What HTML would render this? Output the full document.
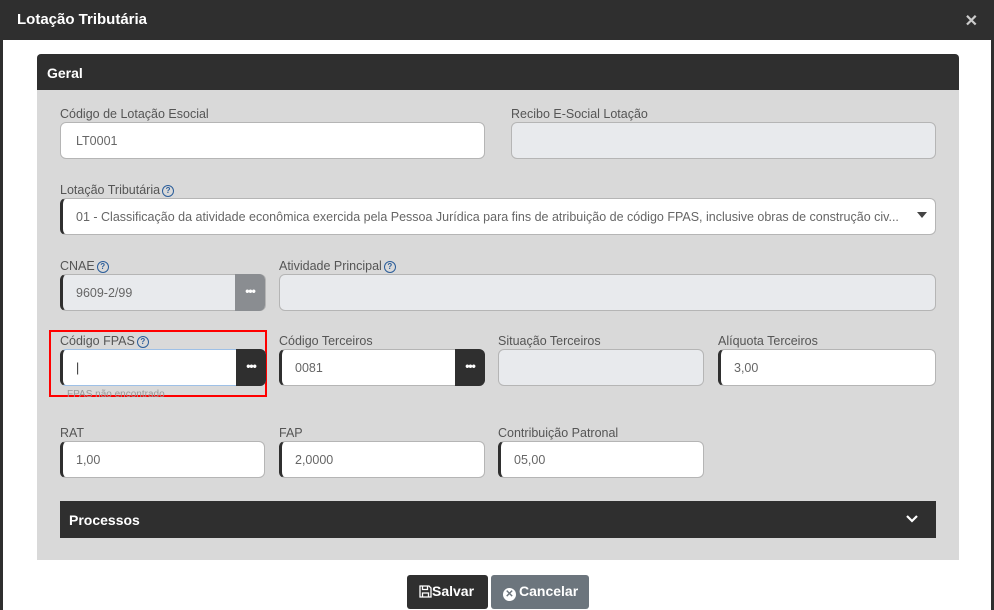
<!DOCTYPE html>
<html><head><meta charset="utf-8"><style>
*{box-sizing:border-box;margin:0;padding:0}
body{width:994px;height:610px;overflow:hidden;background:#fff;font-family:"Liberation Sans",sans-serif;position:relative}
.top{position:absolute;left:0;top:0;width:994px;height:40px;background:#2f2f2f;color:#fff;font-weight:bold;font-size:15px;padding:11px 0 0 17px}
.x{position:absolute;right:16px;top:11px;color:#ccc;font-size:16px}
.side{position:absolute;top:40px;bottom:0;width:3px;background:#2f2f2f}
.panel{position:absolute;left:37px;top:54px;width:922px;height:506px;background:#d9d9d9;border-radius:4px 4px 0 0;overflow:hidden}
.ph{height:36px;background:#2f2f2f;color:#fff;font-weight:bold;font-size:14px;padding:11px 0 0 10px}
.l{position:absolute;font-size:12.5px;color:#555}
.q{display:inline-block;width:12px;height:12px;border:1.3px solid #2a5d9a;border-radius:50%;font-size:8px;color:#2a5d9a;text-align:center;line-height:10px;font-weight:bold;vertical-align:1px;margin-left:2px}
.i{position:absolute;height:37px;background:#fff;border:1px solid #b5b5b5;border-left:3px solid #2f2f2f;border-radius:6px;font-size:12.5px;color:#666;padding:11px 0 0 13px;white-space:nowrap;overflow:hidden}
.g{background:#e8eaed}
.n{border-left:1px solid #b5b5b5;padding-left:15px}
.b{position:absolute;width:30px;height:37px;background:#2f2f2f;border-radius:0 6px 6px 0;color:#fff;font-size:12px;text-align:center;line-height:35px;font-weight:bold;letter-spacing:-1px}
.btn{position:absolute;top:575px;height:34px;border-radius:3px;color:#fff;font-weight:bold;font-size:14px;line-height:33px}
</style></head><body>
<div class="top">Lotação Tributária<span class="x">✕</span></div>
<div class="side" style="left:0"></div><div class="side" style="right:0"></div>
<div class="panel"><div class="ph">Geral</div></div>
<div class="l" style="left:60px;top:107px">Código de Lotação Esocial</div>
<div class="i n" style="left:60px;top:122px;width:425px">LT0001</div>
<div class="l" style="left:511px;top:107px">Recibo E-Social Lotação</div>
<div class="i n g" style="left:511px;top:122px;width:425px"></div>
<div class="l" style="left:60px;top:183px">Lotação Tributária<span class="q">?</span></div>
<div class="i" style="left:60px;top:198px;width:876px">01 - Classificação da atividade econômica exercida pela Pessoa Jurídica para fins de atribuição de código FPAS, inclusive obras de construção civ...<span style="position:absolute;right:8px;top:13px;border:5px solid transparent;border-top:6px solid #444;border-bottom:0"></span></div>
<div class="l" style="left:60px;top:259px">CNAE<span class="q">?</span></div>
<div class="i g" style="left:60px;top:274px;width:206px">9609-2/99</div>
<div class="b" style="left:235px;top:274px;background:#8a8d91">•••</div>
<div class="l" style="left:279px;top:259px">Atividade Principal<span class="q">?</span></div>
<div class="i n g" style="left:279px;top:274px;width:657px"></div>
<div style="position:absolute;left:49px;top:330px;width:218px;height:67px;border:2px solid #f00"></div>
<div class="l" style="left:60px;top:334px">Código FPAS<span class="q">?</span></div>
<div class="i" style="left:60px;top:349px;width:206px;border-color:#9ec0e6;border-left-color:#2f2f2f;color:#333">|</div>
<div class="b" style="left:236px;top:349px">•••</div>
<div class="l" style="left:67px;top:389px;font-size:10px;color:#999">FPAS não encontrado</div>
<div class="l" style="left:279px;top:334px">Código Terceiros</div>
<div class="i" style="left:279px;top:349px;width:206px">0081</div>
<div class="b" style="left:455px;top:349px">•••</div>
<div class="l" style="left:498px;top:334px">Situação Terceiros</div>
<div class="i n g" style="left:498px;top:349px;width:206px"></div>
<div class="l" style="left:718px;top:334px">Alíquota Terceiros</div>
<div class="i" style="left:718px;top:349px;width:218px">3,00</div>
<div class="l" style="left:60px;top:426px">RAT</div>
<div class="i" style="left:60px;top:441px;width:205px">1,00</div>
<div class="l" style="left:279px;top:426px">FAP</div>
<div class="i" style="left:279px;top:441px;width:206px">2,0000</div>
<div class="l" style="left:498px;top:426px">Contribuição Patronal</div>
<div class="i" style="left:498px;top:441px;width:206px">05,00</div>
<div style="position:absolute;left:60px;top:501px;width:876px;height:37px;background:#2f2f2f;color:#fff;font-weight:bold;font-size:14px;padding:11px 0 0 9px">Processos<svg style="position:absolute;right:18px;top:14px" width="12" height="8" viewBox="0 0 12 8"><path d="M1 1l5 5 5-5" stroke="#fff" stroke-width="2.2" fill="none"/></svg></div>
<div class="btn" style="left:407px;width:81px;background:#2f2f2f;padding-left:12px"><svg width="13" height="13" viewBox="0 0 13 13" style="vertical-align:-2px"><path d="M1 1h9l2 2v9H1z M3.5 1v3.5h5V1 M3.5 12V8h6v4" stroke="#fff" stroke-width="1.3" fill="none"/></svg>Salvar</div>
<div class="btn" style="left:491px;width:98px;background:#6c757d;padding-left:12px"><span style="display:inline-block;width:13px;height:13px;border-radius:50%;background:#fff;color:#6c757d;font-size:10px;line-height:13px;text-align:center;vertical-align:-1px;margin-right:3px">✕</span>Cancelar</div>
</body></html>
